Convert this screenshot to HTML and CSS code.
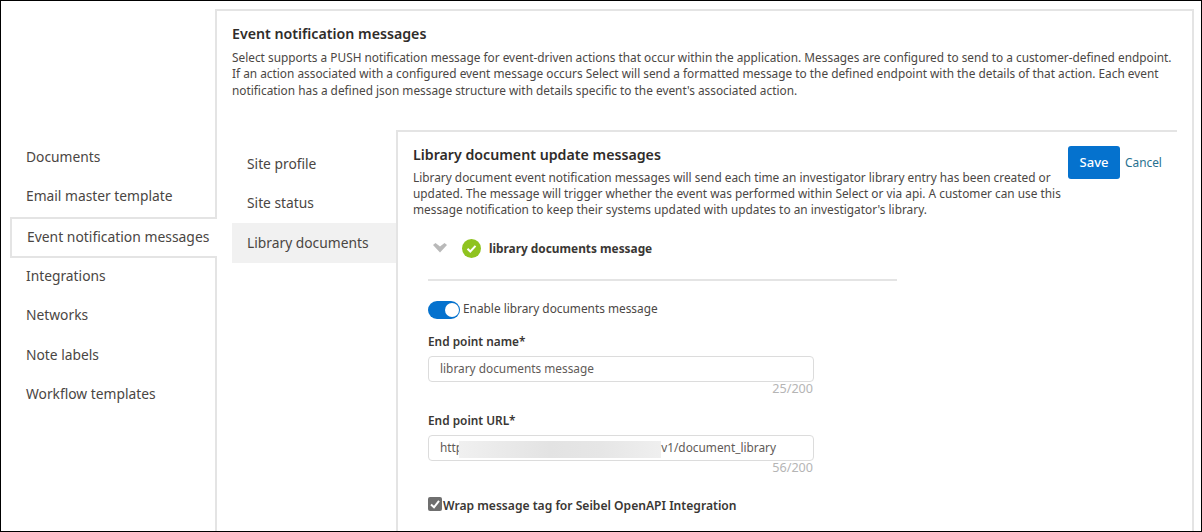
FILE: index.html
```html
<!DOCTYPE html>
<html lang="en">
<head>
    <meta charset="UTF-8">
    <title>Event notification messages</title>
    <link rel="stylesheet" href="styles.css">
</head>
<body>
    <div class="frame">
        <nav class="side-nav">
            <a class="side-link">Documents</a>
            <a class="side-link">Email master template</a>
            <a class="side-link side-link-active">Event notification messages</a>
            <a class="side-link">Integrations</a>
            <a class="side-link">Networks</a>
            <a class="side-link">Note labels</a>
            <a class="side-link">Workflow templates</a>
        </nav>
        <main class="main-panel">
            <h2 class="title">Event notification messages</h2>
            <p class="desc">Select supports a PUSH notification message for event-driven actions that occur within the application. Messages are configured to send to a customer-defined endpoint. If an action associated with a configured event message occurs Select will send a formatted message to the defined endpoint with the details of that action. Each event notification has a defined json message structure with details specific to the event's associated action.</p>
            <div class="sub-layout">
                <div class="sub-nav">
                    <a class="sub-link">Site profile</a>
                    <a class="sub-link">Site status</a>
                    <a class="sub-link sub-link-active">Library documents</a>
                </div>
                <section class="detail">
                    <div class="detail-head">
                        <div class="detail-intro">
                            <h3 class="title">Library document update messages</h3>
                            <p class="desc">Library document event notification messages will send each time an investigator library entry has been created or updated. The message will trigger whether the event was performed within Select or via api. A customer can use this message notification to keep their systems updated with updates to an investigator's library.</p>
                        </div>
                        <div class="actions">
                            <button class="save-btn">Save</button>
                            <a class="cancel-link">Cancel</a>
                        </div>
                    </div>
                    <div class="accordion">
                        <svg class="chevron" width="14" height="10" viewBox="0 0 14 10"><path d="M0 2 L2.5 0 L7 3.5 L11.5 0 L14 2 L7 9.5 Z" fill="#b9b9b9"/></svg>
                        <svg class="ok-icon" width="19" height="19" viewBox="0 0 19 19"><circle cx="9.5" cy="9.5" r="9.5" fill="#8fc31f"/><path d="M5.5 9.8 L8.3 12.5 L13.5 6.8" fill="none" stroke="#fff" stroke-width="2"/></svg>
                        <span class="accordion-label">library documents message</span>
                    </div>
                    <div class="form">
                        <div class="toggle-row">
                            <span class="toggle"><span class="toggle-knob"></span></span>
                            <span class="toggle-text">Enable library documents message</span>
                        </div>
                        <label class="field-label">End point name*</label>
                        <div class="text-input">library documents message</div>
                        <div class="counter">25/200</div>
                        <label class="field-label">End point URL*</label>
                        <div class="text-input">
                            <span>http</span><span class="redacted"></span><span>v1/document_library</span>
                        </div>
                        <div class="counter">56/200</div>
                        <div class="check-row">
                            <svg width="14" height="14" viewBox="0 0 14 14"><rect width="14" height="14" rx="2" fill="#6f6f6f"/><path d="M3 7.5 L6 10.3 L11 3.8" fill="none" stroke="#fff" stroke-width="2"/></svg>
                            <span class="check-text">Wrap message tag for Seibel OpenAPI Integration</span>
                        </div>
                    </div>
                </section>
            </div>
        </main>
    </div>
</body>
</html>
```

FILE: styles.css
```css
html, body {
    margin: 0;
    padding: 0;
}

body {
    font-family: "Noto Sans", "Open Sans", sans-serif;
    font-size: 11.85px;
    color: #4b4744;
    background-color: #fff;
}

.frame {
    box-sizing: border-box;
    width: 1202px;
    height: 532px;
    border: 1px solid #000;
    display: flex;
    overflow: hidden;
}

.side-nav {
    width: 214px;
    flex-shrink: 0;
    padding: 137px 0 0 9px;
    box-sizing: border-box;
    display: flex;
    flex-direction: column;
    position: relative;
    z-index: 1;
}

.side-link {
    height: 39.25px;
    flex-shrink: 0;
    line-height: 38px;
    padding-left: 16px;
    font-size: 13.8px;
    color: #4a4643;
}

.side-link-active {
    height: 41px;
    margin: 0.5px -2px -1px 0;
    padding-left: 15px;
    background-color: #fff;
    border: 2px solid #e4e4e4;
    border-right: none;
    box-sizing: border-box;
    line-height: 36px;
    font-size: 13.9px;
}

.main-panel {
    flex: 1;
    margin: 8px 7px 0 0;
    padding: 13px 15px 0 15px;
    border-top: 2px solid #e4e4e4;
    border-left: 2px solid #e4e4e4;
    border-right: 2px solid #e4e4e4;
}

.title {
    margin: 0;
    font-size: 14.2px;
    line-height: 20px;
    font-weight: 600;
    color: #2f2c2a;
}

.desc {
    margin: 5px 0 0;
    line-height: 16.3px;
}

.detail .desc {
    margin-top: 4px;
}

.sub-layout {
    display: flex;
    margin-top: 32px;
}

.sub-nav {
    width: 164px;
    flex-shrink: 0;
    padding-top: 15px;
    display: flex;
    flex-direction: column;
}

.sub-link {
    height: 39.25px;
    line-height: 38px;
    padding-left: 15px;
    font-size: 13.8px;
    color: #4a4643;
}

.sub-link-active {
    height: 39.5px;
    line-height: 39px;
    background-color: #f1f1f1;
}

.detail {
    flex: 1;
    height: 420px;
    padding: 13px 0 0 15px;
    border-top: 2px solid #e4e4e4;
    border-left: 2px solid #e4e4e4;
}

.detail-head {
    display: flex;
    justify-content: space-between;
}

.detail-intro {
    width: 654px;
}

.actions {
    display: flex;
    align-items: center;
    gap: 5px;
    width: 109px;
    height: 33px;
    margin-top: 1px;
}

.save-btn {
    width: 52px;
    height: 33px;
    flex-shrink: 0;
    border: none;
    border-radius: 3px;
    background-color: #0572ce;
    color: #fff;
    font-family: inherit;
    font-size: 13px;
    font-weight: 500;
}

.cancel-link {
    color: #27708f;
}

.accordion {
    display: flex;
    align-items: center;
    width: 469px;
    height: 63px;
    padding-top: 1px;
    margin-left: 15px;
    border-bottom: 2px solid #e4e4e4;
    box-sizing: border-box;
}

.chevron {
    margin: -1px 0 0 5px;
}

.ok-icon {
    margin-left: 15px;
}

.accordion-label {
    margin: -2px 0 0 8px;
    font-weight: 700;
    color: #3a3734;
}

.form {
    margin-left: 15px;
    width: 386px;
}

.toggle-row {
    display: flex;
    align-items: center;
    margin: 20px 0 13px;
    height: 18px;
}

.toggle {
    width: 32px;
    height: 18px;
    border-radius: 9px;
    background-color: #0572ce;
    position: relative;
    margin-right: 3px;
}

.toggle-knob {
    position: absolute;
    right: 1px;
    top: 2px;
    width: 14px;
    height: 14px;
    border-radius: 50%;
    background-color: #fff;
}

.toggle-text {
    margin-top: -4px;
}

.field-label {
    display: block;
    line-height: 18px;
    font-weight: 600;
    color: #3a3734;
}

.text-input {
    box-sizing: border-box;
    height: 26px;
    margin-top: 6px;
    padding-left: 11px;
    border: 1px solid #dcdcdc;
    border-radius: 4px;
    line-height: 23px;
    color: #5f5b58;
    display: flex;
}

/* grey smear over the host part of the url, overlaps the last letter */
.redacted {
    width: 202px;
    height: 17px;
    margin: 5px 0 0 -4px;
    flex-shrink: 0;
    background: linear-gradient(90deg, #f0f0f0, #e3e3e3 45%, #e6e6e6 70%, #efefef);
}

.counter {
    margin: -1px 0 15px;
    padding-right: 1px;
    text-align: right;
    font-size: 12.6px;
    line-height: 15px;
    color: #b5b5b5;
}

.check-row {
    display: flex;
    align-items: flex-start;
    gap: 1px;
    margin-top: 22px;
    width: 460px;
    height: 14px;
    font-weight: 600;
    color: #3a3734;
}

.check-text {
    font-size: 12.1px;
    line-height: 18px;
}
```
